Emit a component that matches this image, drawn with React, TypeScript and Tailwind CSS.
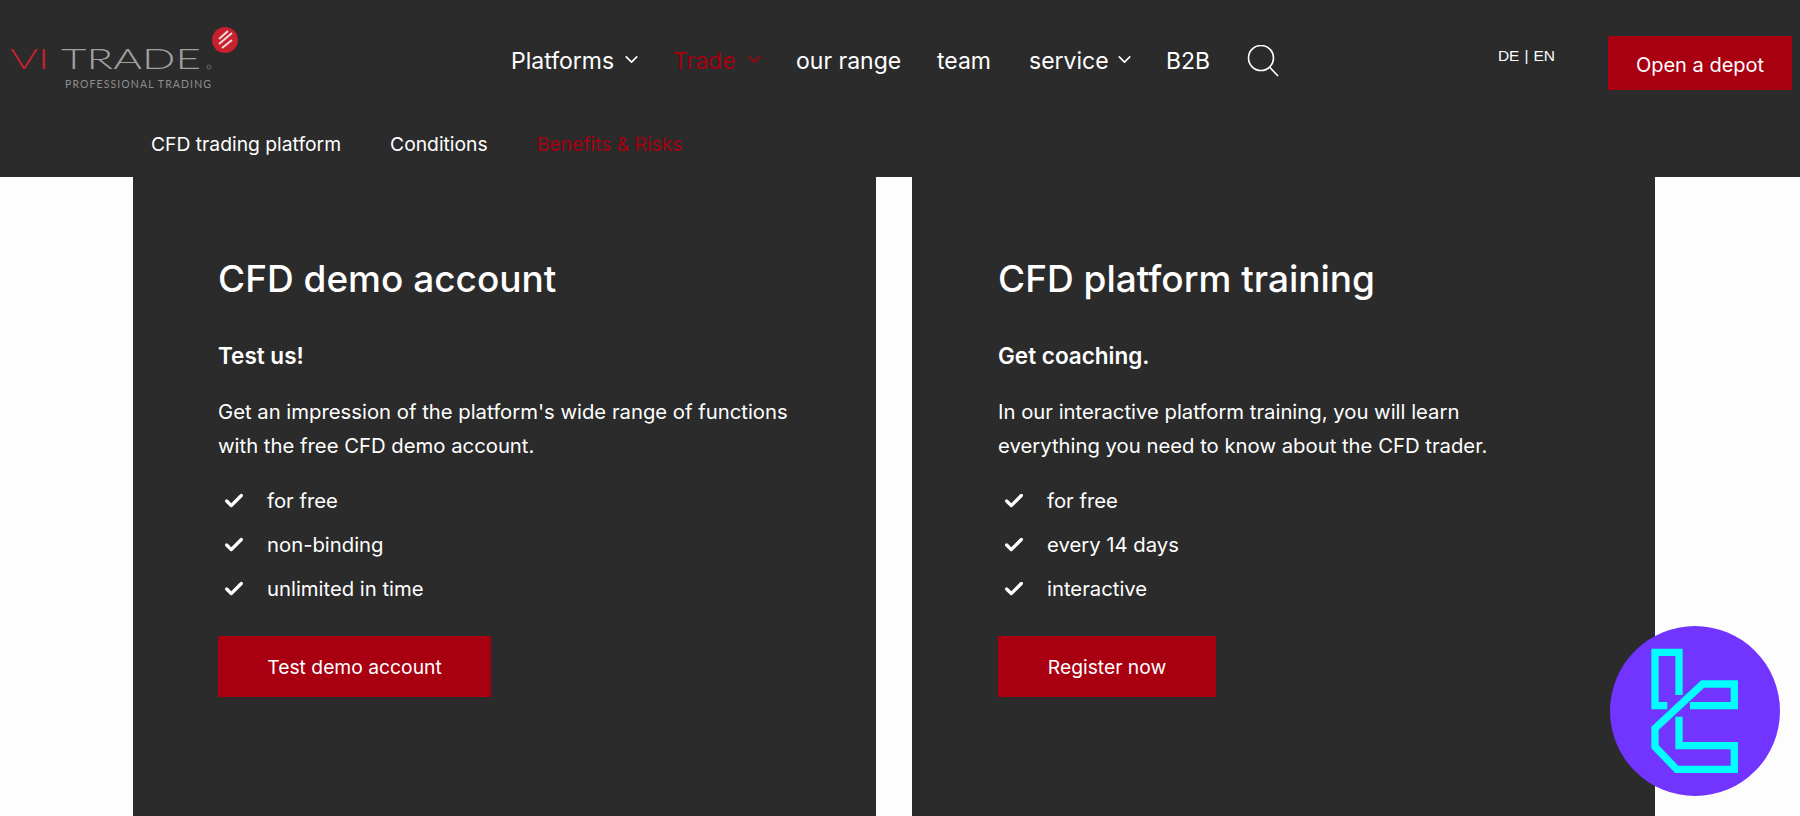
import { Check, ChevronDown } from "lucide-react";

const font = "[font-family:Inter,'Liberation_Sans',sans-serif]";

function Logo() {
  return (
    <div className="relative w-[240px] h-[100px] shrink-0">
      <svg className="absolute left-0 top-0" width="240" height="100" viewBox="0 0 240 100">
        <text x="10" y="69" fontFamily="Lato, sans-serif" fontSize="28" fontWeight="300" fill="#c8202e" textLength="39" lengthAdjust="spacingAndGlyphs">
          VI
        </text>
        <text x="61" y="69" fontFamily="Lato, sans-serif" fontSize="28" fontWeight="300" fill="#a0a0a0" textLength="140" lengthAdjust="spacingAndGlyphs">
          TRADE
        </text>
        <circle cx="225" cy="40" r="13" fill="#c8202e" />
        <path d="M219 39 L228 31 M219 44 L232 33 M222 48 L232 40" stroke="#f4d9da" strokeWidth="2" />
        <circle cx="209" cy="67" r="2" fill="none" stroke="#777" strokeWidth="0.8" />
      </svg>
      <div className="absolute left-[65px] top-[77px] text-[10.5px] leading-[14px] tracking-[1.1px] text-[#8e8e8e] whitespace-nowrap [font-family:Lato,sans-serif]">
        PROFESSIONAL TRADING
      </div>
    </div>
  );
}

function NavItem({ label, red, chevron, w }: { label: string; red?: boolean; chevron?: boolean; w: string }) {
  return (
    <div className={`flex items-center ${w} ${red ? "text-[#a5000f]" : "text-white"}`}>
      <span className="text-[23px] leading-[30px] whitespace-nowrap">{label}</span>
      {chevron && <ChevronDown size={21} strokeWidth={1.9} className="ml-auto -mr-[5px] -mt-[4px]" />}
    </div>
  );
}

function Card({
  title,
  lead,
  lines,
  items,
  button,
  buttonW,
  pad,
}: {
  title: string;
  lead: string;
  lines: string[];
  items: string[];
  button: string;
  buttonW: string;
  pad: string;
}) {
  return (
    <section className={`w-[743px] h-[700px] bg-[#2b2b2b] ${pad} pt-[79px] text-white`}>
      <h2 className="text-[37px] leading-[46px] font-medium">{title}</h2>
      <p className="mt-[39px] text-[22.5px] leading-[30px] font-semibold">{lead}</p>
      <p className="mt-[24px] text-[20.3px] leading-[34px]">
        {lines[0]}
        <br />
        {lines[1]}
      </p>
      <ul className="mt-[16px] flex flex-col">
        {items.map((t) => (
          <li key={t} className="h-[44px] flex items-center text-[20.3px]">
            <Check size={22} strokeWidth={3.6} className="ml-[5px] mr-[22px]" />
            {t}
          </li>
        ))}
      </ul>
      <div
        className={`mt-[25px] h-[61px] pt-[2px] ${buttonW} bg-[#a80011] flex items-center justify-center text-[19.3px]`}
      >
        {button}
      </div>
    </section>
  );
}

export default function App() {
  return (
    <div className={`relative w-[1800px] h-[816px] overflow-hidden bg-[#fdfdfd] ${font}`}>
      <header className="h-[177px] bg-[#2b2b2b] flex flex-col">
        <div className="h-[122px] flex items-start">
          <Logo />
          <nav className="ml-[271px] mt-[45px] flex items-center gap-[36px]">
            <NavItem label="Platforms" chevron w="w-[126px]" />
            <NavItem label="Trade" red chevron w="w-[87px]" />
            <NavItem label="our range" w="w-[105px]" />
            <NavItem label="team" w="w-[56px]" />
            <NavItem label="service" chevron w="w-[101px]" />
            <NavItem label="B2B" w="w-[45px]" />
            <svg width="32" height="32" viewBox="0 0 32 32" fill="none" stroke="white" strokeWidth="1.6">
              <circle cx="14" cy="13" r="12.5" />
              <path d="M22.5 22 L31 31" />
            </svg>
          </nav>
          <div className="ml-auto mt-[46px] mr-[53px] flex gap-[5px] text-white text-[15.5px] leading-[20px] whitespace-nowrap [font-family:'Liberation_Sans',sans-serif]">
            <span>DE</span>
            <span>|</span>
            <span>EN</span>
          </div>
          <div className="mt-[36px] mr-[8px] w-[184px] h-[54px] pt-[4px] bg-[#a80011] text-white text-[20px] flex items-center justify-center">
            Open a depot
          </div>
        </div>
        <div className="pl-[151px] flex items-center gap-[49px] text-[19.3px] leading-[44px] text-white">
          <span>CFD trading platform</span>
          <span>Conditions</span>
          <span className="text-[#a5000f]">Benefits &amp; Risks</span>
        </div>
      </header>
      <main className="pl-[133px] flex gap-[36px]">
        <Card
          title="CFD demo account"
          lead="Test us!"
          lines={[
            "Get an impression of the platform's wide range of functions",
            "with the free CFD demo account.",
          ]}
          items={["for free", "non-binding", "unlimited in time"]}
          button="Test demo account"
          buttonW="w-[273px]"
          pad="pl-[85px]"
        />
        <Card
          title="CFD platform training"
          lead="Get coaching."
          lines={[
            "In our interactive platform training, you will learn",
            "everything you need to know about the CFD trader.",
          ]}
          items={["for free", "every 14 days", "interactive"]}
          button="Register now"
          buttonW="w-[218px]"
          pad="pl-[86px]"
        />
      </main>
      <svg
        className="absolute left-[1610px] top-[626px]"
        width="170"
        height="170"
        viewBox="150 78 510 510"
        fill="none"
      >
        <circle cx="405" cy="333" r="255" fill="#7135ff" />
        <g stroke="#00ffff" strokeWidth="22" strokeLinejoin="miter">
          <path d="M357 285 V157 H285 V317 H322" />
          <path d="M390 317 H523 V252 H428 L285 385 V440 L350 508 H523 V437 H357 V350" />
        </g>
      </svg>
    </div>
  );
}
